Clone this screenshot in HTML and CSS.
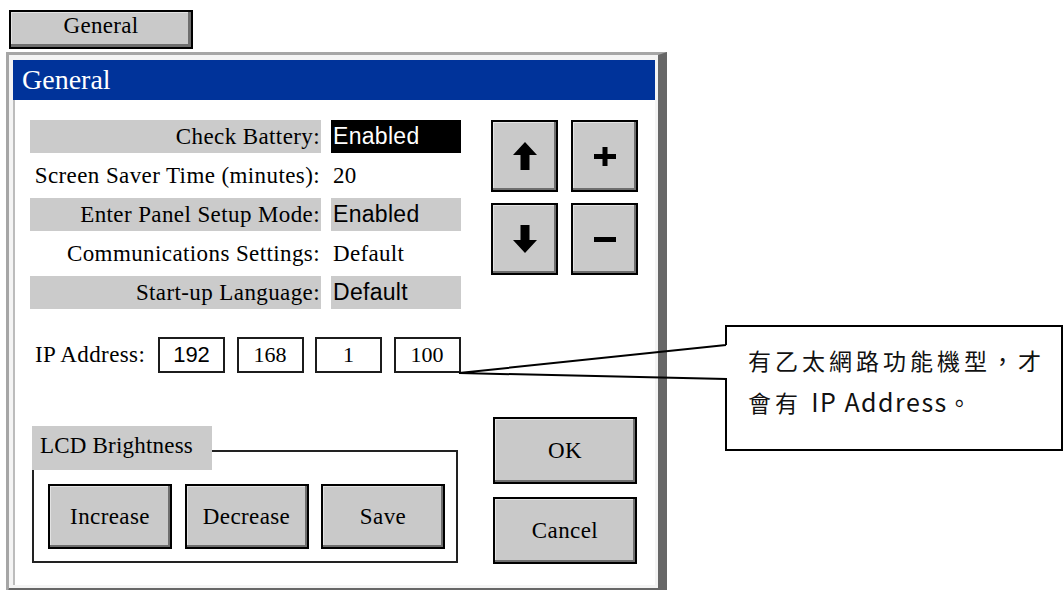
FILE: index.html
```html
<!DOCTYPE html>
<html lang="zh-TW">
<head>
  <meta charset="UTF-8" />
  <title>General</title>
  <link rel="stylesheet" href="styles.css">
</head>
<body>
  <div class="tab" lang="en">General</div>

  <div class="window" lang="en">
    <div class="titlebar">General</div>
    <div class="client">
      <div class="top">
        <div class="settings">
          <div class="row"><span class="label shade">Check Battery:</span><span class="value sans selected">Enabled</span></div>
          <div class="row"><span class="label">Screen Saver Time (minutes):</span><span class="value">20</span></div>
          <div class="row"><span class="label shade">Enter Panel Setup Mode:</span><span class="value sans shade">Enabled</span></div>
          <div class="row"><span class="label">Communications Settings:</span><span class="value">Default</span></div>
          <div class="row"><span class="label shade">Start-up Language:</span><span class="value sans shade">Default</span></div>
        </div>

        <div class="keypad">
          <button class="btn key">
            <svg width="24" height="28" viewBox="0 0 24 28"><path d="M12 0L24 13H16.5V28H7.5V13H0Z"/></svg>
          </button>
          <button class="btn key">
            <svg width="22" height="19" viewBox="0 0 22 19"><path d="M0 9.5H22M11 0V19" stroke="#000" stroke-width="5"/></svg>
          </button>
          <button class="btn key">
            <svg width="24" height="28" viewBox="0 0 24 28"><path d="M12 28L24 15H16.5V0H7.5V15H0Z"/></svg>
          </button>
          <button class="btn key">
            <svg width="22" height="5" viewBox="0 0 22 5"><path d="M0 2.5H22" stroke="#000" stroke-width="5"/></svg>
          </button>
        </div>
      </div>

      <div class="ip">
        <span class="ip-label">IP Address:</span>
        <span class="ip-box sans">192</span>
        <span class="ip-box">168</span>
        <span class="ip-box">1</span>
        <span class="ip-box">100</span>
      </div>

      <div class="bottom">
        <div class="group">
          <div class="group-title">LCD Brightness</div>
          <div class="group-buttons">
            <button class="btn wide">Increase</button>
            <button class="btn wide">Decrease</button>
            <button class="btn wide">Save</button>
          </div>
        </div>
        <div class="dialog-buttons">
          <button class="btn big">OK</button>
          <button class="btn big">Cancel</button>
        </div>
      </div>
    </div>
  </div>

  <!-- annotation -->
  <svg class="callout-shape" width="1064" height="590" viewBox="0 0 1064 590">
    <rect x="726" y="326" width="336" height="124" fill="#fff"/>
    <path d="M726 345V326H1062V450H726V379L459 373L726 345" fill="none" stroke="#000" stroke-width="2"/>
  </svg>
  <div class="callout" lang="zh-TW">有乙太網路功能機型，才<br>會有 <span class="latin">IP Address</span>。</div>
</body>
</html>
```

FILE: styles.css
```css
html {
  overflow: hidden;
}
body {
  margin: 0;
  padding: 10px 0 0 6px;
  background: #fff;
  font-family: "Liberation Serif", serif;
  color: #000;
}
.btn {
  background: #c9c9c9;
  border: 2px solid #000;
  box-shadow: inset -2px -2px 0 #6e6e6e, inset 1px 1px 0 #e2e2e2;
  padding: 0;
  font-family: "Liberation Serif", serif;
  font-size: 23px;
  letter-spacing: 0.4px;
  color: #000;
  display: flex;
  align-items: center;
  justify-content: center;
  box-sizing: border-box;
}
.tab {
  margin-left: 3px;
  width: 184px;
  height: 39px;
  box-sizing: border-box;
  background: #c9c9c9;
  border: 2px solid #000;
  box-shadow: inset -3px -3px 0 #6e6e6e, inset 1px 1px 0 #e2e2e2;
  text-align: center;
  font-size: 23px;
  letter-spacing: 0.3px;
  line-height: 28px;
}
.window {
  margin-top: 3px;
  width: 661px;
  box-sizing: border-box;
  border-top: 3px solid #a6a6a6;
  border-left: 3px solid #a6a6a6;
  border-right: 9px solid #676767;
  border-bottom: 9px solid #676767;
  padding: 5px 3px 3px 4px;
  background: #f4f4f4;
}
.titlebar {
  height: 40px;
  background: #00339a;
  color: #fff;
  font-size: 28px;
  line-height: 40px;
  padding-left: 9px;
}
.client {
  height: 485px;
  box-sizing: border-box;
  background: #fff;
  box-shadow: inset 2px 0 0 #bcbcbc;
  padding: 20px 0 0 17px;
}
.top {
  display: flex;
}
.settings {
  width: 431px;
  display: flex;
  flex-direction: column;
  gap: 6px;
}
.row {
  display: grid;
  grid-template-columns: 291px 130px;
  column-gap: 10px;
  height: 33px;
  line-height: 33px;
  font-size: 23px;
}
.label {
  text-align: right;
  padding-right: 1px;
  letter-spacing: 0.4px;
  white-space: nowrap;
}
.value {
  padding-left: 2px;
  letter-spacing: 0.3px;
}
.sans {
  font-family: "Liberation Sans", sans-serif;
}
.shade {
  background: #cbcbcb;
}
.selected {
  background: #000;
  color: #fff;
}
.keypad {
  margin-left: 30px;
  display: grid;
  grid-template-columns: 67px 67px;
  grid-template-rows: 72px 72px;
  gap: 11px 13px;
}
.ip {
  margin-top: 28px;
  display: flex;
  align-items: center;
  gap: 11.5px;
  height: 36px;
}
.ip-label {
  width: 128px;
  margin-right: -11.5px;
  padding-left: 5px;
  box-sizing: border-box;
  font-size: 23px;
  letter-spacing: 0.4px;
}
.ip-box {
  width: 67px;
  height: 36px;
  box-sizing: border-box;
  border: 2px solid #1c1c1c;
  text-align: center;
  font-size: 22px;
  line-height: 32px;
}
.bottom {
  margin-top: 44px;
  display: flex;
  align-items: flex-start;
}
.group {
  position: relative;
  margin: 33px 0 0 2px;
  width: 426px;
  height: 113px;
  box-sizing: border-box;
  border: 2px solid #222;
}
.group-title {
  position: absolute;
  left: -2px;
  top: -26px;
  width: 180px;
  height: 44px;
  box-sizing: border-box;
  padding-left: 8px;
  background: #cbcbcb;
  font-size: 23px;
  letter-spacing: 0.2px;
  line-height: 40px;
}
.group-buttons {
  display: flex;
  gap: 12.5px;
  padding: 32px 0 0 14px;
}
.wide {
  width: 124px;
  height: 65px;
}
.dialog-buttons {
  margin-left: 35px;
  display: flex;
  flex-direction: column;
  gap: 13px;
}
.big {
  width: 144px;
  height: 67px;
}
.callout-shape {
  position: absolute;
  left: 0;
  top: 0;
  pointer-events: none;
}
.callout {
  position: absolute;
  left: 748px;
  top: 340px;
  font-family: "Noto Sans CJK TC", "Noto Sans", sans-serif;
  font-size: 23px;
  letter-spacing: 4px;
  line-height: 41px;
  color: #111;
}
.callout .latin {
  font-size: 25px;
  letter-spacing: 1.5px;
}
```
